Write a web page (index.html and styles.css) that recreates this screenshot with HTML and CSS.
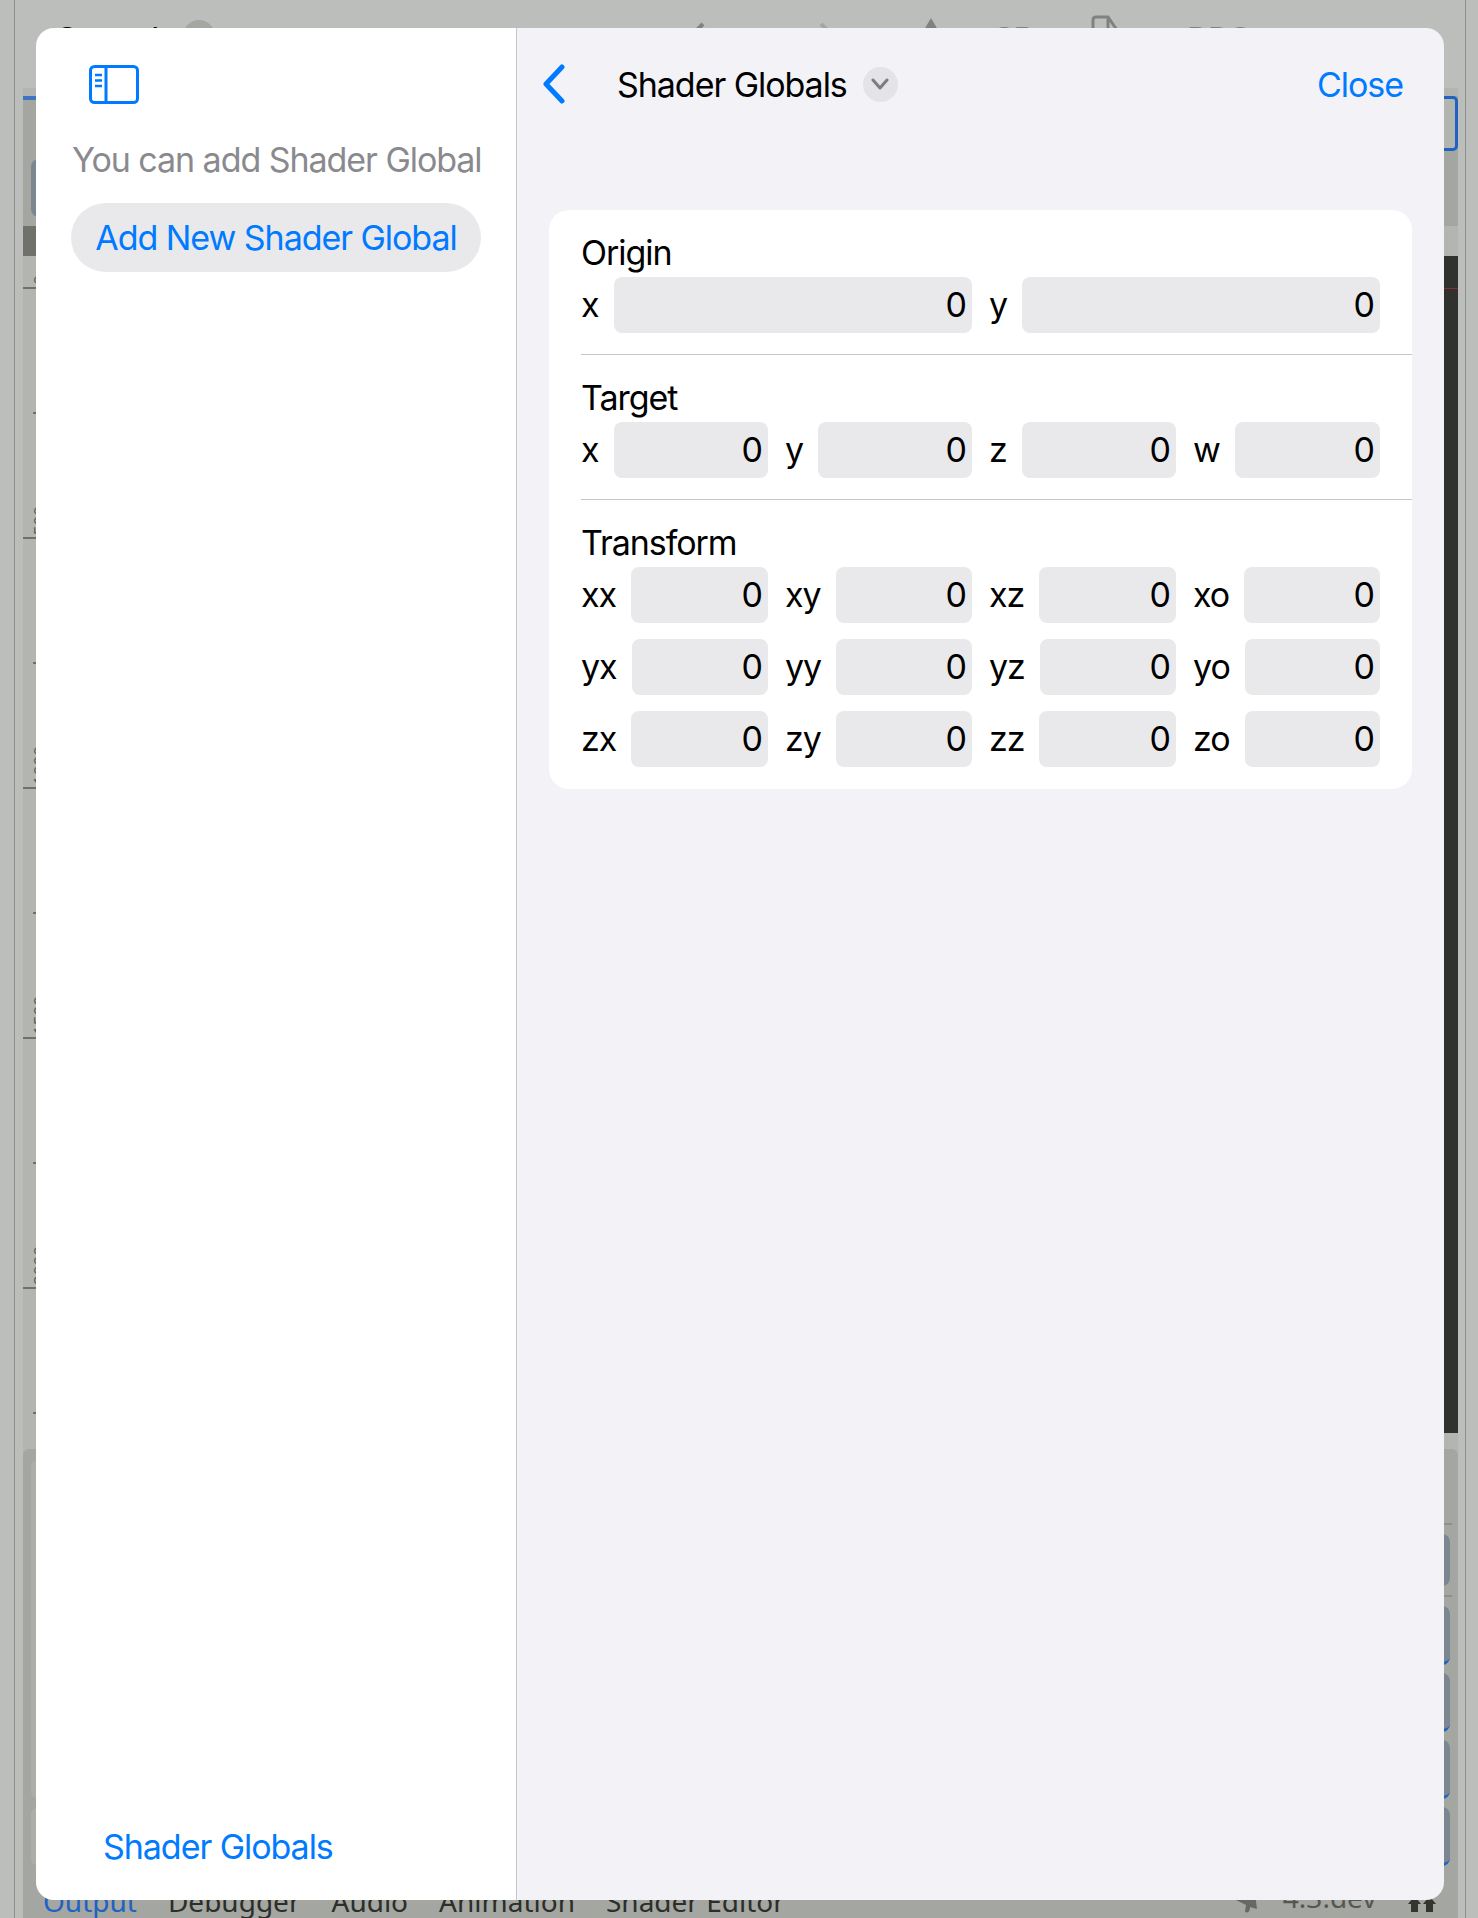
FILE: index.html
```html
<!DOCTYPE html>
<html lang="en">

<head>
  <meta charset="UTF-8">
  <meta name="viewport" content="width=device-width, initial-scale=1.0">
  <title>Shader Globals</title>
  <link rel="stylesheet" href="styles.css">
</head>

<body>
  <!-- Dimmed editor behind the sheet -->
  <div class="editor">
    <div class="topbar">
      <span class="scene-title">Sound</span>
      <span class="scene-badge"></span>
      <svg class="nav-back" width="24" height="40" viewBox="0 0 24 40">
        <path d="M20 4 L4 20 L20 36" fill="none" stroke="#7f827e" stroke-width="4" />
      </svg>
      <svg class="nav-forward" width="24" height="40" viewBox="0 0 24 40">
        <path d="M4 4 L20 20 L4 36" fill="none" stroke="#a3a6a1" stroke-width="4" />
      </svg>
      <svg class="tool-pin" width="20" height="40" viewBox="0 0 20 40">
        <path d="M10 0 L17 12 V40 H3 V12 Z" fill="#7f827e" />
      </svg>
      <span class="tool-label tool-3d">3D</span>
      <svg class="tool-file" width="34" height="40" viewBox="0 0 34 40">
        <path d="M2 38 V5 Q2 2 5 2 H17 L32 24 V38 M17 2 V24 H32" fill="none" stroke="#7f827e" stroke-width="3" />
      </svg>
      <span class="tool-label tool-rpc">RPC</span>
    </div>

    <div class="workspace">
      <div class="tab-strip">
        <div class="tab-left">
          <span class="tab-marker"></span>
          <span class="tab-thumb"></span>
        </div>
        <div class="tab-right">
          <span class="tab-selected"></span>
        </div>
      </div>

      <div class="path-bar">
        <span class="path-block"></span>
      </div>

      <div class="viewport">
        <div class="ruler">
          <div class="ruler-step ruler-first"><span class="ruler-num">0</span><i class="tick-long"></i></div>
          <div class="ruler-step"><i class="tick-short"></i></div>
          <div class="ruler-step"><span class="ruler-num">500</span><i class="tick-long"></i></div>
          <div class="ruler-step"><i class="tick-short"></i></div>
          <div class="ruler-step"><span class="ruler-num">1000</span><i class="tick-long"></i></div>
          <div class="ruler-step"><i class="tick-short"></i></div>
          <div class="ruler-step"><span class="ruler-num">1500</span><i class="tick-long"></i></div>
          <div class="ruler-step"><i class="tick-short"></i></div>
          <div class="ruler-step"><span class="ruler-num">2000</span><i class="tick-long"></i></div>
          <div class="ruler-step"><i class="tick-short"></i></div>
        </div>
        <div class="canvas">
          <div class="canvas-axis"></div>
        </div>
      </div>

      <div class="dock">
        <div class="dock-body">
          <div class="dock-left">
            <div class="dock-pane dock-pane-tall"></div>
            <div class="dock-pane dock-pane-short"></div>
          </div>
          <div class="dock-right">
            <div class="dock-rule"></div>
            <div class="dock-row"></div>
            <div class="dock-rule"></div>
            <div class="dock-row selected"></div>
            <div class="dock-row selected"></div>
            <div class="dock-row selected"></div>
            <div class="dock-row selected"></div>
          </div>
        </div>
        <div class="dock-tabs">
          <span class="dock-tab active">Output</span>
          <span class="dock-tab">Debugger</span>
          <span class="dock-tab">Audio</span>
          <span class="dock-tab">Animation</span>
          <span class="dock-tab">Shader Editor</span>
          <svg class="dock-bell" width="24" height="36" viewBox="0 0 24 36">
            <path d="M18 0 L22 30 L15 28 Q15 35 10 33 L11 26 L1 21 Q10 16 10 8 Z" fill="#666963" />
          </svg>
          <span class="dock-version">4.3.dev</span>
          <svg class="dock-arrows" width="28" height="24" viewBox="0 0 28 24">
            <path d="M3 24 V16 H0 L6.500 8 L13 16 H10 V24 Z M18 24 V16 H15 L21.500 8 L28 16 H25 V24 Z" fill="#33362f" />
          </svg>
        </div>
      </div>
    </div>
  </div>

  <!-- Sheet -->
  <div class="sheet">
    <div class="sidebar">
      <svg class="sidebar-icon" width="50" height="39" viewBox="0 0 50 39">
        <rect x="1.5" y="1.5" width="47" height="36" rx="4" fill="none" stroke="#007aff" stroke-width="3" />
        <path d="M17 2 V37" stroke="#007aff" stroke-width="3" />
        <path d="M6 10 H13 M6 15.5 H13 M6 21 H13" stroke="#007aff" stroke-width="2.4" />
      </svg>
      <p class="sidebar-hint">You can add Shader Global</p>
      <div class="add-btn">Add New Shader Global</div>
      <div class="sidebar-footer">Shader Globals</div>
    </div>

    <div class="detail">
      <div class="detail-header">
        <svg class="back-icon" width="23" height="40" viewBox="0 0 23 40">
          <path d="M20 3 L4 20 L20 37" fill="none" stroke="#007aff" stroke-width="5" stroke-linecap="round" stroke-linejoin="round" />
        </svg>
        <span class="detail-title">Shader Globals</span>
        <span class="title-menu">
          <svg width="18" height="12" viewBox="0 0 18 12">
            <path d="M2 2 L9 10 L16 2" fill="none" stroke="#7c7c82" stroke-width="3" stroke-linecap="round" stroke-linejoin="round" />
          </svg>
        </span>
        <span class="close-btn">Close</span>
      </div>

      <div class="card">
        <div class="group">
          <div class="group-title">Origin</div>
          <div class="fields two">
            <div class="cell"><span class="cell-label">x</span><span class="cell-value">0</span></div>
            <div class="cell"><span class="cell-label">y</span><span class="cell-value">0</span></div>
          </div>
        </div>

        <div class="group">
          <div class="group-title">Target</div>
          <div class="fields">
            <div class="cell"><span class="cell-label">x</span><span class="cell-value">0</span></div>
            <div class="cell"><span class="cell-label">y</span><span class="cell-value">0</span></div>
            <div class="cell"><span class="cell-label">z</span><span class="cell-value">0</span></div>
            <div class="cell"><span class="cell-label">w</span><span class="cell-value">0</span></div>
          </div>
        </div>

        <div class="group last">
          <div class="group-title">Transform</div>
          <div class="fields">
            <div class="cell"><span class="cell-label">xx</span><span class="cell-value">0</span></div>
            <div class="cell"><span class="cell-label">xy</span><span class="cell-value">0</span></div>
            <div class="cell"><span class="cell-label">xz</span><span class="cell-value">0</span></div>
            <div class="cell"><span class="cell-label">xo</span><span class="cell-value">0</span></div>
            <div class="cell"><span class="cell-label">yx</span><span class="cell-value">0</span></div>
            <div class="cell"><span class="cell-label">yy</span><span class="cell-value">0</span></div>
            <div class="cell"><span class="cell-label">yz</span><span class="cell-value">0</span></div>
            <div class="cell"><span class="cell-label">yo</span><span class="cell-value">0</span></div>
            <div class="cell"><span class="cell-label">zx</span><span class="cell-value">0</span></div>
            <div class="cell"><span class="cell-label">zy</span><span class="cell-value">0</span></div>
            <div class="cell"><span class="cell-label">zz</span><span class="cell-value">0</span></div>
            <div class="cell"><span class="cell-label">zo</span><span class="cell-value">0</span></div>
          </div>
        </div>
      </div>
    </div>
  </div>
</body>

</html>
```

FILE: styles.css
```css
body {
  font-family: Inter, 'Liberation Sans', sans-serif;
  margin: 0;
  padding: 0;
  width: 1478px;
  height: 1918px;
  overflow: hidden;
  position: relative;
  background: #bcbebb;
}

/* Editor behind the sheet */
.editor {
  box-sizing: border-box;
  height: 1918px;
  margin: 0 12px 0 14px;
  padding: 0 7px 0 8px;
  border-left: 1px solid #8f918e;
  border-right: 1px solid #8f918e;
  display: flex;
  flex-direction: column;
}

.topbar {
  height: 88px;
  flex: none;
  display: flex;
  align-items: flex-start;
  position: relative;
}

.scene-title {
  margin: 20px 0 0 33px;
  font-size: 34px;
  line-height: 40px;
  color: #000;
}

.scene-badge {
  width: 32px;
  height: 32px;
  margin: 20px 0 0 24px;
  border-radius: 50%;
  background: #a3a6a1;
}

.nav-back {
  margin: 20px 0 0 468px;
}

.nav-forward {
  margin: 20px 0 0 110px;
}

.tool-pin {
  margin: 18px 0 0 80px;
}

.tool-label {
  font-family: 'Noto Sans', sans-serif;
  font-size: 32px;
  line-height: 40px;
  font-weight: 700;
  color: #7f827e;
}

.tool-3d {
  margin: 18px 0 0 54px;
}

.tool-file {
  margin: 15px 0 0 54px;
}

.tool-rpc {
  margin: 18px 0 0 62px;
}

.workspace {
  flex: 1;
  display: flex;
  flex-direction: column;
  background: #b3b5b1;
  min-height: 0;
}

.tab-strip {
  margin-top: 8px;
  height: 130px;
  flex: none;
  display: flex;
  justify-content: space-between;
  background: #a3a6a1;
}

.tab-left {
  width: 300px;
}

.tab-marker {
  display: block;
  height: 4px;
  background: #3f74c4;
}

.tab-thumb {
  display: block;
  width: 200px;
  height: 58px;
  margin: 59px 0 0 8px;
  border-radius: 8px;
  background: #7c8691;
}

.tab-right {
  width: 300px;
}

.tab-selected {
  display: block;
  box-sizing: border-box;
  height: 55px;
  border: 3px solid #2061c4;
  border-radius: 5px;
  background: #b3b5b1;
}

.path-bar {
  height: 30px;
  flex: none;
}

.path-block {
  display: block;
  width: 300px;
  height: 30px;
  background: #6f716a;
}

.viewport {
  height: 1177px;
  flex: none;
  display: flex;
}

.ruler {
  width: 13px;
  flex: none;
}

.ruler-step {
  box-sizing: border-box;
  height: 125px;
  display: flex;
  flex-direction: column;
  justify-content: flex-end;
  align-items: flex-end;
}

.ruler-first {
  height: 33px;
}

.ruler-num {
  writing-mode: vertical-rl;
  transform: rotate(180deg);
  font-family: 'Noto Sans', sans-serif;
  font-size: 17px;
  line-height: 17px;
  color: #5d5f5a;
  align-self: flex-start;
  margin: 0 0 2px 8px;
}

.tick-long {
  display: block;
  width: 13px;
  height: 2px;
  background: #6f716a;
}

.tick-short {
  display: block;
  width: 3px;
  height: 2px;
  background: #6f716a;
}

.canvas {
  flex: 1;
  background: #30332d;
  padding-top: 32px;
}

.canvas-axis {
  height: 1px;
  background: #8c2a36;
}

.dock {
  margin-top: 16px;
  flex: 1;
  display: flex;
  flex-direction: column;
  justify-content: space-between;
  background: #a3a6a1;
  border-radius: 6px 6px 0 0;
}

.dock-body {
  display: flex;
  justify-content: space-between;
  padding: 11px 8px 0 8px;
}

.dock-left {
  width: 200px;
}

.dock-pane {
  background: #abaea9;
  border-radius: 6px 0 0 6px;
}

.dock-pane-tall {
  height: 338px;
}

.dock-pane-short {
  height: 57px;
  margin-top: 10px;
}

.dock-right {
  width: 300px;
  padding-top: 63px;
  display: flex;
  flex-direction: column;
}

.dock-rule {
  height: 2px;
  margin-right: -2px;
  background: #8f918e;
}

.dock-row {
  height: 52px;
  margin: 9px 0;
  border-radius: 8px;
  background: #7c8691;
}

.dock-row.selected {
  box-sizing: border-box;
  height: 59px;
  margin: 0 0 8px 0;
  border-bottom: 3px solid #2061c4;
}

.dock-rule + .dock-row.selected {
  margin-top: 9px;
}

.dock-tabs {
  height: 34px;
  display: flex;
  align-items: flex-end;
  padding-left: 20px;
  font-family: 'Noto Sans', sans-serif;
  overflow: hidden;
}

.dock-tab {
  font-size: 28px;
  line-height: 34px;
  color: #2c2e2a;
  margin-right: 31px;
  white-space: nowrap;
}

.dock-tab.active {
  color: #2061c4;
}

.dock-bell {
  margin: 0 0 3px 419px;
  flex: none;
}

.dock-version {
  font-size: 28px;
  line-height: 34px;
  color: #555751;
  margin: 0 0 4px 24px;
}

.dock-arrows {
  flex: none;
  margin: 0 0 6px 31px;
}

/* Sheet */
.sheet {
  position: absolute;
  left: 36px;
  top: 28px;
  width: 1408px;
  height: 1872px;
  border-radius: 18px;
  overflow: hidden;
  display: flex;
  font-size: 34px;
  letter-spacing: -1.05px;
}

.sidebar {
  box-sizing: border-box;
  width: 481px;
  flex: none;
  padding: 37px 35px 0 35px;
  background: #fff;
  border-right: 1px solid #c6c6c8;
  display: flex;
  flex-direction: column;
}

.sidebar-icon {
  margin-left: 18px;
}

.sidebar-hint {
  margin: 35px 0 0 1px;
  line-height: 42px;
  color: #8a8a8e;
  white-space: nowrap;
}

.add-btn {
  margin-top: 22px;
  height: 69px;
  line-height: 69px;
  width: 410px;
  border-radius: 35px;
  background: #e9e9eb;
  color: #007aff;
  text-align: center;
  white-space: nowrap;
}

.sidebar-footer {
  margin: auto 0 32px 32px;
  line-height: 42px;
  color: #007aff;
}

.detail {
  flex: 1;
  min-width: 0;
  background: #f2f2f7;
  padding: 0 32px 0 32px;
}

.detail-header {
  height: 112px;
  display: flex;
  align-items: center;
  margin-right: 9px;
}

.back-icon {
  margin-left: -7px;
}

.detail-title {
  margin-left: 52px;
  color: #000;
  white-space: nowrap;
}

.title-menu {
  width: 35px;
  height: 35px;
  margin-left: 16px;
  border-radius: 50%;
  background: #e3e3e8;
  display: flex;
  align-items: center;
  justify-content: center;
}

.close-btn {
  margin-left: auto;
  color: #007aff;
}

.card {
  margin-top: 70px;
  background: #fff;
  border-radius: 20px;
}

.group {
  margin-left: 32px;
  padding: 22px 32px 21px 0;
  border-bottom: 1px solid #c6c6c8;
}

.group.last {
  border-bottom: none;
  padding-bottom: 22px;
}

.group-title {
  height: 41px;
  line-height: 41px;
  margin-bottom: 4px;
  color: #000;
}

.fields {
  display: grid;
  grid-template-columns: repeat(4, minmax(0, 1fr));
  gap: 16px 17px;
}

.fields.two {
  grid-template-columns: repeat(2, minmax(0, 1fr));
}

.cell {
  display: flex;
  align-items: center;
  gap: 15px;
}

.cell-label {
  line-height: 56px;
  flex: none;
  color: #000;
}

.cell-value {
  flex: 1;
  min-width: 0;
  height: 56px;
  line-height: 56px;
  padding-right: 6px;
  text-align: right;
  background: #e9e9eb;
  border-radius: 8px;
  color: #000;
}
```
